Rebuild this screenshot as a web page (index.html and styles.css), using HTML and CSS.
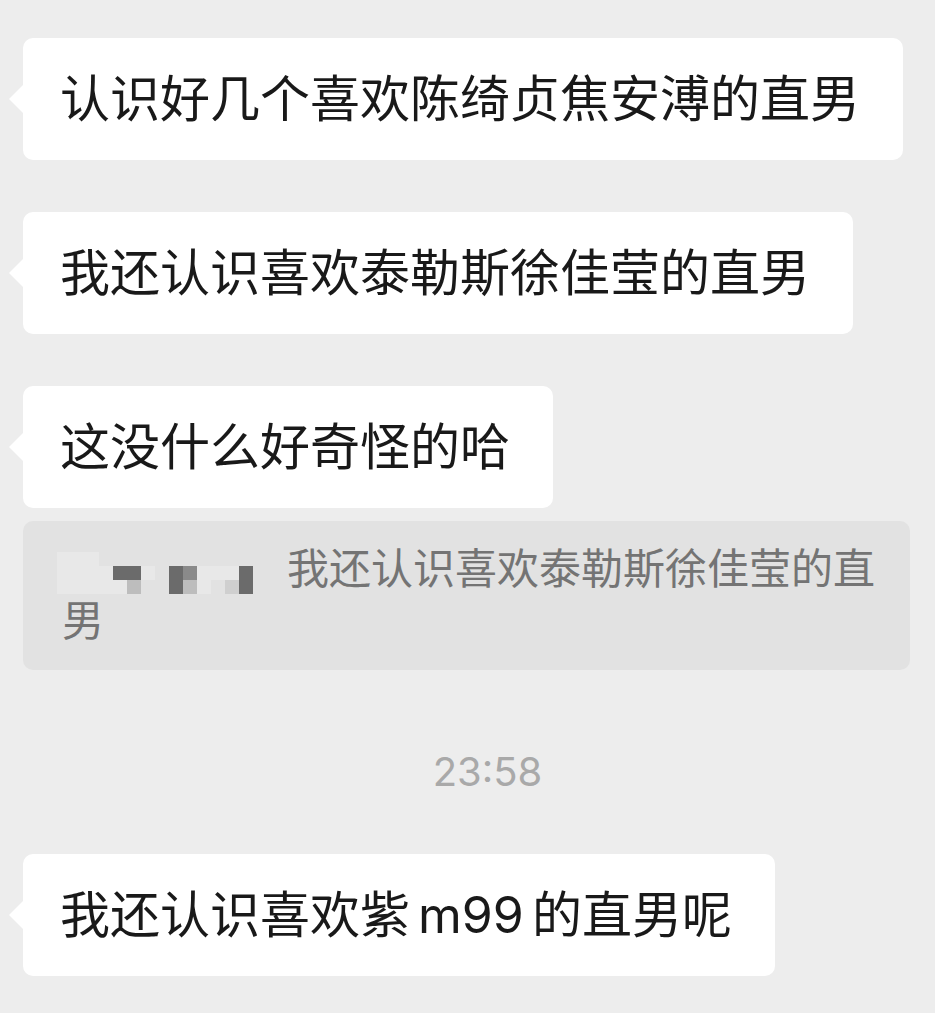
FILE: index.html
```html
<!DOCTYPE html>
<html lang="zh-CN">
<head>
  <meta charset="UTF-8">
  <meta name="viewport" content="width=device-width, initial-scale=1.0">
  <title>聊天记录</title>
  <link rel="stylesheet" href="styles.css">
</head>
<body>
  <div class="chat">
    <div class="bubble">认识好几个喜欢陈绮贞焦安溥的直男</div>
    <div class="bubble">我还认识喜欢泰勒斯徐佳莹的直男</div>
    <div class="bubble">这没什么好奇怪的哈</div>
    <div class="quote"><span class="mosaic">
        <i class="f"></i><i class="f"></i><i class="f"></i><i></i><i></i><i></i><i></i><i></i><i></i><i></i><i></i><i></i><i></i><i></i><i></i>
        <i class="f"></i><i class="f"></i><i class="f"></i><i class="f"></i><i class="d"></i><i class="d"></i><i class="f"></i><i></i><i class="d"></i><i class="m"></i><i class="f"></i><i class="f"></i><i class="f"></i><i class="d"></i><i></i>
        <i class="f"></i><i class="f"></i><i class="f"></i><i class="f"></i><i class="f"></i><i class="l"></i><i></i><i></i><i class="d"></i><i class="l"></i><i class="f"></i><i></i><i class="l2"></i><i class="d"></i><i></i>
      </span>我还认识喜欢泰勒斯徐佳莹的直男</div>
    <div class="time">23:58</div>
    <div class="bubble last">我还认识喜欢紫 m99 的直男呢</div>
  </div>
</body>
</html>
```

FILE: styles.css
```css
html, body {
  margin: 0;
  background: #ededed;
}
body {
  font-family: Inter, "Noto Sans CJK SC", sans-serif;
  width: 935px;
  height: 1013px;
  overflow: hidden;
}
.chat {
  display: flex;
  flex-direction: column;
  align-items: flex-start;
  padding: 38px 0 0 23px;
}
.bubble {
  position: relative;
  background: #fff;
  color: #191919;
  font-size: 50px;
  line-height: 70px;
  padding: 26px 43px 26px 37px;
  border-radius: 10px;
  margin-bottom: 52px;
  white-space: nowrap;
}
.bubble::before {
  content: "";
  position: absolute;
  left: -14px;
  top: 50%;
  margin-top: -15px;
  border-top: 15px solid transparent;
  border-bottom: 15px solid transparent;
  border-right: 15px solid #fff;
}
.bubble:nth-child(3) {
  margin-bottom: 13px;
}
.bubble.last {
  word-spacing: -6px;
}
.quote {
  box-sizing: border-box;
  width: 887px;
  background: #e2e2e2;
  color: #747474;
  font-size: 42px;
  line-height: 52px;
  padding: 22px 30px 23px 39px;
  border-radius: 10px;
}
.mosaic {
  display: inline-grid;
  grid-template-columns: repeat(15, 14px);
  grid-template-rows: repeat(3, 14px);
  vertical-align: middle;
  margin: 0 20px 0 -5px;
}
.mosaic i {
  display: block;
}
.mosaic .f { background: #e8e8e8; }
.mosaic .d { background: #6b6b6b; }
.mosaic .m { background: #8a8a8a; }
.mosaic .l { background: #bdbdbd; }
.mosaic .l2 { background: #cfcfcf; }
.time {
  align-self: stretch;
  text-align: center;
  margin: 74px 23px 54px 0;
  padding-left: 40px;
  font-size: 40px;
  line-height: 56px;
  color: #a9a9a9;
}
```
